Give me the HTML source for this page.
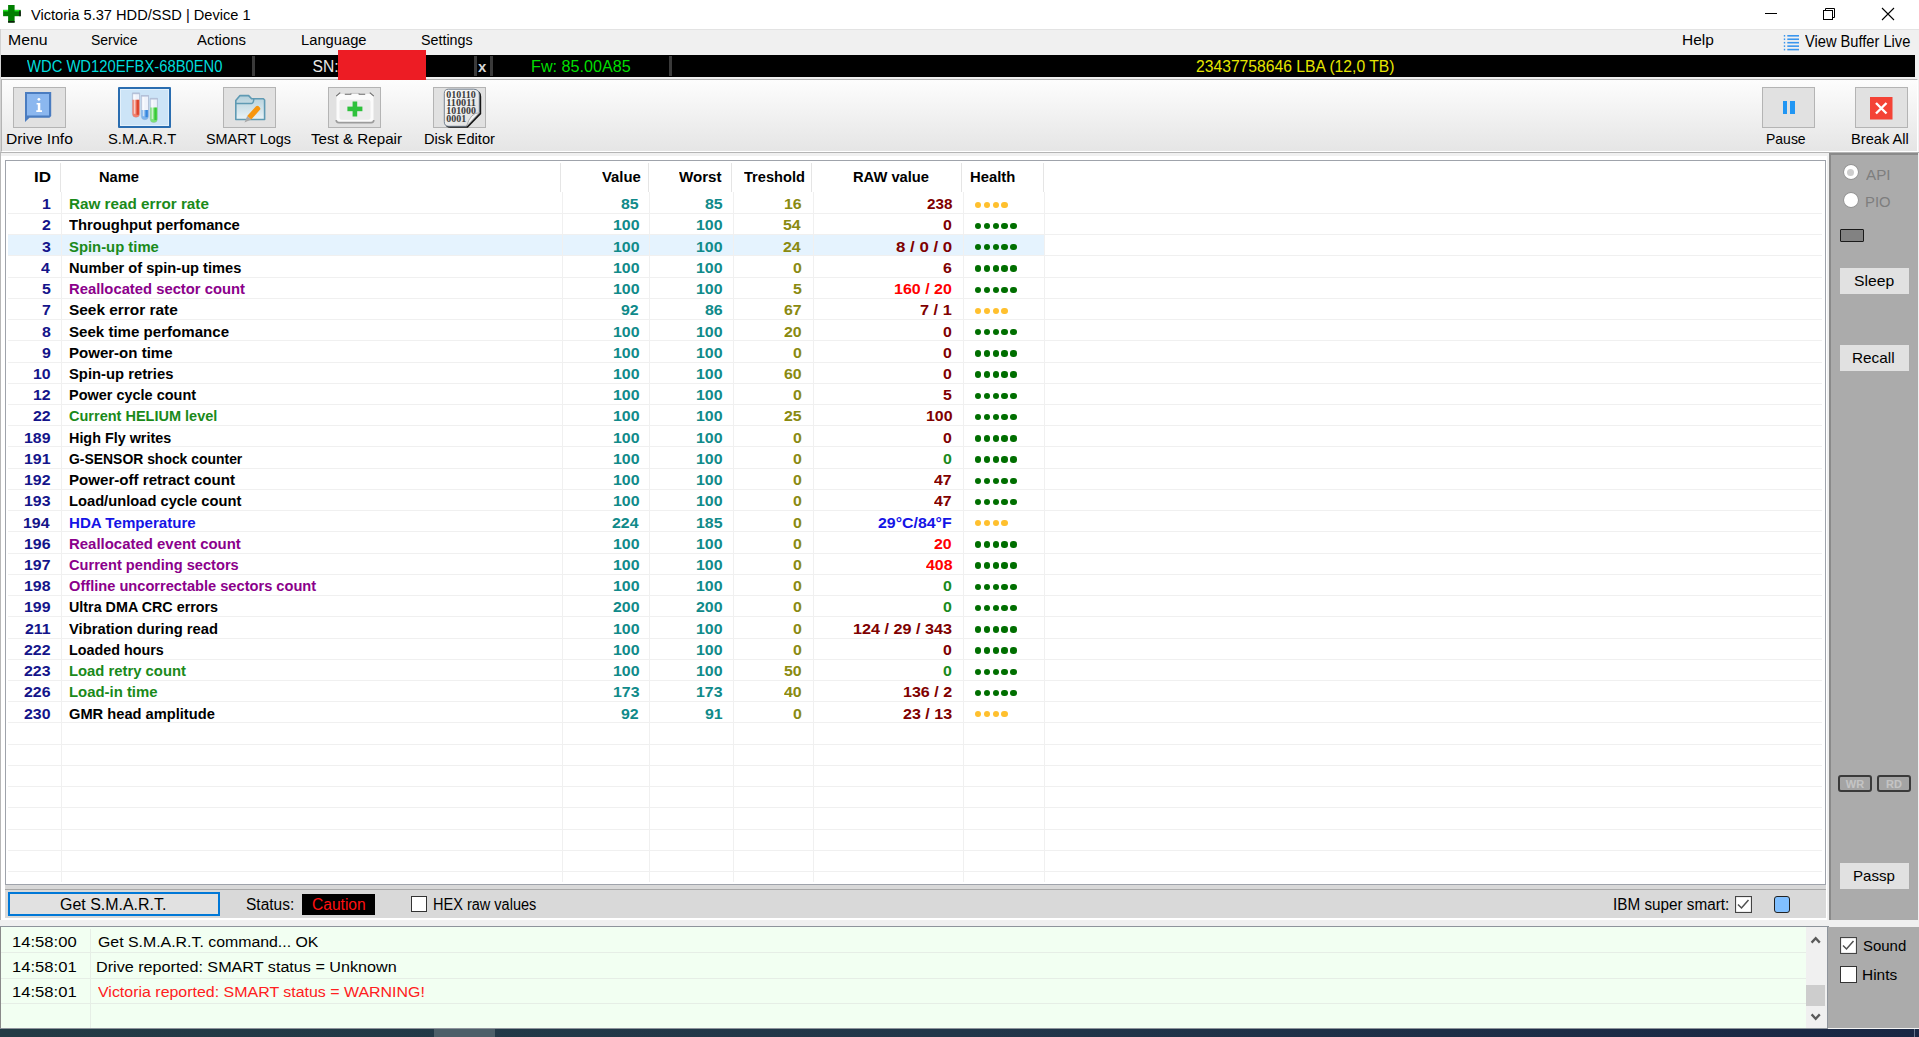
<!DOCTYPE html><html><head><meta charset="utf-8"><style>html,body{margin:0;padding:0;width:1919px;height:1037px;overflow:hidden;background:#fff;}.t{position:absolute;white-space:pre;font-family:"Liberation Sans",sans-serif;}.b{position:absolute;}</style></head><body><div class="b" style="left:0px;top:0px;width:1919px;height:29px;background:#fff"></div>
<svg class="b" style="left:0px;top:0px" width="28" height="28"><rect x="8.1" y="5" width="6.5" height="17.6" fill="#007f00"/><rect x="3.1" y="9.9" width="17.7" height="6.3" fill="#007f00"/><rect x="3.1" y="9.9" width="5" height="1.5" fill="#20e820"/><rect x="14.6" y="9.9" width="4.6" height="1.5" fill="#20e820"/><rect x="8.1" y="21" width="6.5" height="1.6" fill="#0e1e0e"/><rect x="19.2" y="11.2" width="1.6" height="5" fill="#1a1a1a"/></svg>
<div class="t" style="left:31.20px;top:6.70px;font-size:14.7px;line-height:16.90px;color:#000;font-weight:normal;;transform:scaleX(0.9954);transform-origin:0 0">Victoria 5.37 HDD/SSD | Device 1</div>
<div class="b" style="left:1765px;top:13px;width:12px;height:1px;background:#000"></div>
<svg class="b" style="left:1820px;top:5px" width="20" height="18"><rect x="3.5" y="5.5" width="9" height="9" fill="none" stroke="#000" stroke-width="1"/><path d="M5.5 5.5 V3.5 H14.5 V12.5 H12.5" fill="none" stroke="#000" stroke-width="1"/></svg>
<svg class="b" style="left:1880px;top:6px" width="16" height="16"><path d="M2 2 L14 14 M14 2 L2 14" stroke="#000" stroke-width="1.1"/></svg>
<div class="b" style="left:0px;top:29px;width:1919px;height:26px;background:#f0f0f0;border-top:1px solid #e3e3e3;box-sizing:border-box"></div>
<div class="t" style="left:8.16px;top:31.15px;font-size:15.3px;line-height:17.59px;color:#000;font-weight:normal;;transform:scaleX(1.0365);transform-origin:0 0">Menu</div>
<div class="t" style="left:91.30px;top:31.15px;font-size:15.3px;line-height:17.59px;color:#000;font-weight:normal;;transform:scaleX(0.9129);transform-origin:0 0">Service</div>
<div class="t" style="left:196.50px;top:31.15px;font-size:15.3px;line-height:17.59px;color:#000;font-weight:normal;;transform:scaleX(0.9760);transform-origin:0 0">Actions</div>
<div class="t" style="left:300.74px;top:31.15px;font-size:15.3px;line-height:17.59px;color:#000;font-weight:normal;;transform:scaleX(0.9632);transform-origin:0 0">Language</div>
<div class="t" style="left:421.30px;top:31.15px;font-size:15.3px;line-height:17.59px;color:#000;font-weight:normal;;transform:scaleX(0.9349);transform-origin:0 0">Settings</div>
<div class="t" style="left:1681.99px;top:31.15px;font-size:15.3px;line-height:17.59px;color:#000;font-weight:normal;;transform:scaleX(1.0116);transform-origin:0 0">Help</div>
<svg class="b" style="left:1783px;top:34px" width="18" height="18"><rect x="0.8" y="1.00" width="1.4" height="1.6" fill="#3a96ee"/><rect x="4.3" y="1.00" width="11.7" height="1.6" fill="#3a96ee"/><rect x="0.8" y="4.45" width="1.4" height="1.6" fill="#3a96ee"/><rect x="4.3" y="4.45" width="11.7" height="1.6" fill="#3a96ee"/><rect x="0.8" y="7.90" width="1.4" height="1.6" fill="#3a96ee"/><rect x="4.3" y="7.90" width="11.7" height="1.6" fill="#3a96ee"/><rect x="0.8" y="11.35" width="1.4" height="1.6" fill="#3a96ee"/><rect x="4.3" y="11.35" width="11.7" height="1.6" fill="#3a96ee"/><rect x="0.8" y="14.80" width="1.4" height="1.6" fill="#3a96ee"/><rect x="4.3" y="14.80" width="11.7" height="1.6" fill="#3a96ee"/></svg>
<div class="t" style="left:1805.00px;top:32.88px;font-size:15.6px;line-height:17.94px;color:#000;font-weight:normal;;transform:scaleX(0.9395);transform-origin:0 0">View Buffer Live</div>
<div class="b" style="left:0px;top:55px;width:1919px;height:22px;background:#f0f0f0"></div>
<div class="b" style="left:1px;top:55px;width:1914px;height:22px;background:#000"></div>
<div class="b" style="left:252px;top:56px;width:3px;height:20px;background:#3a3a3a"></div>
<div class="b" style="left:474px;top:56px;width:3px;height:20px;background:#3a3a3a"></div>
<div class="b" style="left:490px;top:56px;width:3px;height:20px;background:#3a3a3a"></div>
<div class="b" style="left:669px;top:56px;width:3px;height:20px;background:#3a3a3a"></div>
<div class="t" style="left:27.20px;top:57.68px;font-size:15.6px;line-height:17.94px;color:#00dcdc;font-weight:normal;;transform:scaleX(0.9479);transform-origin:0 0">WDC WD120EFBX-68B0EN0</div>
<div class="t" style="left:312.5px;top:57.68px;font-size:15.6px;line-height:17.94px;color:#e8e8e8;font-weight:normal;">SN:</div>
<div class="t" style="left:478px;top:57.92px;font-size:15px;line-height:17.25px;color:#d8d8d8;font-weight:bold;">x</div>
<div class="t" style="left:530.66px;top:57.68px;font-size:15.6px;line-height:17.94px;color:#00dd00;font-weight:normal;;transform:scaleX(1.0372);transform-origin:0 0">Fw: 85.00A85</div>
<div class="t" style="left:1195.60px;top:57.68px;font-size:15.6px;line-height:17.94px;color:#e6e600;font-weight:normal;;transform:scaleX(1.0054);transform-origin:0 0">23437758646 LBA (12,0 TB)</div>
<div class="b" style="left:0px;top:77px;width:1919px;height:76px;background:#f0f0f0"></div>
<div class="b" style="left:1px;top:79px;width:1917px;height:73px;background:linear-gradient(#fdfdfd,#e5e5e5);border-top:1px solid #b4b4b4;border-left:1px solid #b4b4b4;border-right:1px solid #fff;border-bottom:1px solid #fff;box-sizing:border-box"></div>
<div class="b" style="left:12.5px;top:86.5px;width:53.5px;height:41px;background:#e1e1e1;border:1.2px solid #b4b4b4;box-sizing:border-box"></div>
<svg class="b" style="left:24px;top:91px" width="30" height="33"><path d="M1 1 H27.2 V25 L25.5 26.7 H5.5 L1 31 Z" fill="#4a7cc0"/><path d="M3 3 H25 V24.5 H3 Z" fill="#8bb7ef"/><circle cx="14.9" cy="8.3" r="1.4" fill="#fff"/><path d="M12.6 12 H16.3 V19.3 H18 V21 H12.3 V19.3 H13.8 V13.4 H12.6 Z" fill="#fff"/></svg>
<div class="t" style="left:6.46px;top:130.12px;font-size:15px;line-height:17.25px;color:#000;font-weight:normal;;transform:scaleX(1.0422);transform-origin:0 0">Drive Info</div>
<div class="b" style="left:117.6px;top:86.6px;width:53.6px;height:41.2px;background:#cce4f7;border:2px solid #2a6db0;border-radius:1px;box-sizing:border-box;box-shadow:inset 0 0 0 1px #e4f1fb"></div>
<svg class="b" style="left:115px;top:82px" width="60" height="50"><path d="M17.4 11.1 H24.599999999999998 V31.699999999999996 A3.6 3.6 0 0 1 17.4 31.699999999999996 Z" fill="#eef2fb" stroke="#a9b7cf" stroke-width="0.8"/><rect x="17.099999999999998" y="10.799999999999999" width="7.8" height="1.4" fill="#b4c0d8"/><path d="M17.4 17.8 H24.599999999999998 V31.699999999999996 A3.6 3.6 0 0 1 17.4 31.699999999999996 Z" fill="#f0806e"/><rect x="21.599999999999998" y="17.8" width="2.3" height="14.999999999999996" fill="#d42a10" opacity="0.7"/><rect x="18.799999999999997" y="12.6" width="1.6" height="19.2" fill="#fff" opacity="0.6"/><path d="M26.3 13.5 H33.5 V34.1 A3.6 3.6 0 0 1 26.3 34.1 Z" fill="#eef2fb" stroke="#a9b7cf" stroke-width="0.8"/><rect x="26.0" y="13.2" width="7.8" height="1.4" fill="#b4c0d8"/><path d="M26.3 28 H33.5 V34.1 A3.6 3.6 0 0 1 26.3 34.1 Z" fill="#7db3ec"/><rect x="30.5" y="28" width="2.3" height="7.200000000000003" fill="#1a74d8" opacity="0.7"/><rect x="27.7" y="15.0" width="1.6" height="19.2" fill="#fff" opacity="0.6"/><path d="M35.2 16.4 H42.400000000000006 V36.99999999999999 A3.6 3.6 0 0 1 35.2 36.99999999999999 Z" fill="#eef2fb" stroke="#a9b7cf" stroke-width="0.8"/><rect x="34.900000000000006" y="16.099999999999998" width="7.8" height="1.4" fill="#b4c0d8"/><path d="M35.2 25.6 H42.400000000000006 V36.99999999999999 A3.6 3.6 0 0 1 35.2 36.99999999999999 Z" fill="#7ce07a"/><rect x="39.400000000000006" y="25.6" width="2.3" height="12.499999999999993" fill="#18c018" opacity="0.7"/><rect x="36.6" y="17.9" width="1.6" height="19.2" fill="#fff" opacity="0.6"/></svg>
<div class="t" style="left:108.00px;top:130.12px;font-size:15px;line-height:17.25px;color:#000;font-weight:normal;;transform:scaleX(0.9854);transform-origin:0 0">S.M.A.R.T</div>
<div class="b" style="left:222.5px;top:86.5px;width:53.5px;height:41px;background:#e1e1e1;border:1.2px solid #b4b4b4;box-sizing:border-box"></div>
<svg class="b" style="left:233px;top:93px" width="34" height="32"><defs><linearGradient id="fg" x1="0" y1="0" x2="0" y2="1"><stop offset="0" stop-color="#b3cfda"/><stop offset="1" stop-color="#eaf3f7"/></linearGradient></defs><path d="M2.8 26.5 V7.6 L7 2.6 H15.6 L18.6 5.8 H30.4 L31.6 7 V26.5 Z" fill="url(#fg)" stroke="#5f9ab3" stroke-width="1.6" stroke-linejoin="round"/><path d="M2.8 10.4 H18.5 Q20.6 10.4 20.8 6" fill="none" stroke="#5f9ab3" stroke-width="1.5"/><path d="M14.2 23 L22.8 13.4 Q24.2 12 25.7 13.3 L26.8 14.4 Q28 15.8 26.7 17.1 L18.2 26.5 Z" fill="#f7960f"/><path d="M14.2 23 L18.2 26.5 L11.5 29.5 Z" fill="#a8a8a8"/></svg>
<div class="t" style="left:205.50px;top:130.12px;font-size:15px;line-height:17.25px;color:#000;font-weight:normal;;transform:scaleX(0.9590);transform-origin:0 0">SMART Logs</div>
<div class="b" style="left:327.5px;top:86.5px;width:53.5px;height:41px;background:#e1e1e1;border:1.2px solid #b4b4b4;box-sizing:border-box"></div>
<svg class="b" style="left:334px;top:90px" width="42" height="36"><rect x="2.5" y="4" width="37" height="28.5" rx="3" fill="#fbfbfb"/><rect x="5.5" y="9.8" width="31" height="20" rx="2" fill="#ececec"/><path d="M2.2 6.2 L6.2 2.6 M10.8 4.3 H16.8 L17.4 3.3 M24.6 3.3 L25.2 4.3 H31.2 M35.8 2.6 L39.8 6.2" fill="none" stroke="#6a6a6a" stroke-width="1.1"/><path d="M17.4 3.3 H24.6" stroke="#c8c8c8" stroke-width="1"/><path d="M2.2 30 Q2.2 32.6 4.8 32.6 H37.2 Q39.8 32.6 39.8 30" fill="none" stroke="#9c9c9c" stroke-width="1.6"/><rect x="18.6" y="11.5" width="4.6" height="15" fill="#2ec13c"/><rect x="13.4" y="16.6" width="15" height="4.6" fill="#2ec13c"/></svg>
<div class="t" style="left:311.00px;top:130.12px;font-size:15px;line-height:17.25px;color:#000;font-weight:normal;;transform:scaleX(1.0106);transform-origin:0 0">Test &amp; Repair</div>
<div class="b" style="left:432.5px;top:86.5px;width:53.5px;height:41px;background:#e1e1e1;border:1.2px solid #b4b4b4;box-sizing:border-box"></div>
<svg class="b" style="left:443px;top:88px" width="40" height="41"><defs><linearGradient id="dg" x1="0" y1="0" x2="1" y2="1"><stop offset="0" stop-color="#fafafa"/><stop offset="1" stop-color="#dcdcdc"/></linearGradient></defs><path d="M6.5 2.5 H32 Q38.2 2.5 38.2 8.7 V26 L24.8 39.8 H7 Q2.6 39.8 2.6 35.4 V6.5 Q2.6 2.5 6.5 2.5 Z" fill="#151515"/><path d="M5.5 1.2 H30.5 Q36.3 1.2 36.3 7 V25 L23.3 38.3 H5.8 Q1.3 38.3 1.3 33.8 V5.4 Q1.3 1.2 5.5 1.2 Z" fill="url(#dg)" stroke="#6a7888" stroke-width="0.9"/><g font-family="Liberation Serif" font-size="9.4" font-weight="bold" fill="#3c3c3c"><text x="3.3" y="9.5" textLength="29.6" lengthAdjust="spacingAndGlyphs">010110</text><text x="3.3" y="17.8" textLength="29.6" lengthAdjust="spacingAndGlyphs">110011</text><text x="3.3" y="25.8" textLength="29.6" lengthAdjust="spacingAndGlyphs">101000</text><text x="3.3" y="33.7" textLength="20" lengthAdjust="spacingAndGlyphs">0001</text></g><path d="M36.3 24.8 Q27.5 24.5 23.6 38.2 Z" fill="#f2f2f2" stroke="#9a9a9a" stroke-width="0.8"/></svg>
<div class="t" style="left:424.02px;top:130.12px;font-size:15px;line-height:17.25px;color:#000;font-weight:normal;;transform:scaleX(0.9787);transform-origin:0 0">Disk Editor</div>
<div class="b" style="left:1761.5px;top:86.5px;width:53.5px;height:41px;background:#e1e1e1;border:1.2px solid #b4b4b4;box-sizing:border-box"></div>
<div class="b" style="left:1782.5px;top:101px;width:4.7px;height:12.8px;background:#2196f3"></div><div class="b" style="left:1790px;top:101px;width:5px;height:12.8px;background:#2196f3"></div>
<div class="t" style="left:1765.67px;top:130.12px;font-size:15px;line-height:17.25px;color:#000;font-weight:normal;;transform:scaleX(0.9323);transform-origin:0 0">Pause</div>
<div class="b" style="left:1854.5px;top:86.5px;width:53.5px;height:41px;background:#e1e1e1;border:1.2px solid #b4b4b4;box-sizing:border-box"></div>
<svg class="b" style="left:1870px;top:96.5px" width="23" height="23"><rect width="22.5" height="22.5" fill="#f44336"/><path d="M6 6 L16.5 16.5 M16.5 6 L6 16.5" stroke="#fff" stroke-width="2.4"/></svg>
<div class="t" style="left:1850.52px;top:130.12px;font-size:15px;line-height:17.25px;color:#000;font-weight:normal;;transform:scaleX(0.9763);transform-origin:0 0">Break All</div>
<div class="b" style="left:338px;top:50px;width:88px;height:30px;background:#ed1c24"></div>
<div class="b" style="left:0px;top:29px;width:1px;height:124px;background:#d2d2d2"></div>
<div class="b" style="left:0px;top:152px;width:1919px;height:775px;background:#f0f0f0"></div>
<div class="b" style="left:0px;top:152px;width:1919px;height:1px;background:#b4b4b4"></div>
<div class="b" style="left:0px;top:153px;width:1px;height:767px;background:#b8b8b8"></div>
<div class="b" style="left:1px;top:156px;width:1826px;height:764px;background:#fff"></div>
<div class="b" style="left:5px;top:160px;width:1821px;height:725px;background:#fff;border:1px solid #9fa3ab;box-sizing:border-box"></div>
<div class="b" style="left:60px;top:163px;width:1px;height:29px;background:#e5e5e5"></div>
<div class="b" style="left:560px;top:163px;width:1px;height:29px;background:#e5e5e5"></div>
<div class="b" style="left:648px;top:163px;width:1px;height:29px;background:#e5e5e5"></div>
<div class="b" style="left:731px;top:163px;width:1px;height:29px;background:#e5e5e5"></div>
<div class="b" style="left:811px;top:163px;width:1px;height:29px;background:#e5e5e5"></div>
<div class="b" style="left:961px;top:163px;width:1px;height:29px;background:#e5e5e5"></div>
<div class="b" style="left:1043px;top:163px;width:1px;height:29px;background:#e5e5e5"></div>
<div class="t" style="left:33.50px;top:169.29px;font-size:14.6px;line-height:16.79px;color:#000;font-weight:bold;;transform:scaleX(1.1669);transform-origin:0 0">ID</div>
<div class="t" style="left:98.80px;top:169.29px;font-size:14.6px;line-height:16.79px;color:#000;font-weight:bold;;transform:scaleX(1.0042);transform-origin:0 0">Name</div>
<div class="t" style="left:602.40px;top:169.29px;font-size:14.6px;line-height:16.79px;color:#000;font-weight:bold;;transform:scaleX(1.0181);transform-origin:0 0">Value</div>
<div class="t" style="left:678.70px;top:169.29px;font-size:14.6px;line-height:16.79px;color:#000;font-weight:bold;;transform:scaleX(1.0359);transform-origin:0 0">Worst</div>
<div class="t" style="left:744.00px;top:169.29px;font-size:14.6px;line-height:16.79px;color:#000;font-weight:bold;;transform:scaleX(1.0016);transform-origin:0 0">Treshold</div>
<div class="t" style="left:852.80px;top:169.29px;font-size:14.6px;line-height:16.79px;color:#000;font-weight:bold;;transform:scaleX(1.0079);transform-origin:0 0">RAW value</div>
<div class="t" style="left:970.00px;top:169.29px;font-size:14.6px;line-height:16.79px;color:#000;font-weight:bold;;transform:scaleX(1.0160);transform-origin:0 0">Health</div>
<div class="b" style="left:8px;top:213px;width:1814px;height:1px;background:#f0f0f0"></div>
<div class="b" style="left:8px;top:234px;width:1814px;height:1px;background:#f0f0f0"></div>
<div class="b" style="left:8px;top:255px;width:1814px;height:1px;background:#f0f0f0"></div>
<div class="b" style="left:8px;top:277px;width:1814px;height:1px;background:#f0f0f0"></div>
<div class="b" style="left:8px;top:298px;width:1814px;height:1px;background:#f0f0f0"></div>
<div class="b" style="left:8px;top:319px;width:1814px;height:1px;background:#f0f0f0"></div>
<div class="b" style="left:8px;top:340px;width:1814px;height:1px;background:#f0f0f0"></div>
<div class="b" style="left:8px;top:362px;width:1814px;height:1px;background:#f0f0f0"></div>
<div class="b" style="left:8px;top:383px;width:1814px;height:1px;background:#f0f0f0"></div>
<div class="b" style="left:8px;top:404px;width:1814px;height:1px;background:#f0f0f0"></div>
<div class="b" style="left:8px;top:425px;width:1814px;height:1px;background:#f0f0f0"></div>
<div class="b" style="left:8px;top:446px;width:1814px;height:1px;background:#f0f0f0"></div>
<div class="b" style="left:8px;top:468px;width:1814px;height:1px;background:#f0f0f0"></div>
<div class="b" style="left:8px;top:489px;width:1814px;height:1px;background:#f0f0f0"></div>
<div class="b" style="left:8px;top:510px;width:1814px;height:1px;background:#f0f0f0"></div>
<div class="b" style="left:8px;top:531px;width:1814px;height:1px;background:#f0f0f0"></div>
<div class="b" style="left:8px;top:553px;width:1814px;height:1px;background:#f0f0f0"></div>
<div class="b" style="left:8px;top:574px;width:1814px;height:1px;background:#f0f0f0"></div>
<div class="b" style="left:8px;top:595px;width:1814px;height:1px;background:#f0f0f0"></div>
<div class="b" style="left:8px;top:616px;width:1814px;height:1px;background:#f0f0f0"></div>
<div class="b" style="left:8px;top:638px;width:1814px;height:1px;background:#f0f0f0"></div>
<div class="b" style="left:8px;top:659px;width:1814px;height:1px;background:#f0f0f0"></div>
<div class="b" style="left:8px;top:680px;width:1814px;height:1px;background:#f0f0f0"></div>
<div class="b" style="left:8px;top:701px;width:1814px;height:1px;background:#f0f0f0"></div>
<div class="b" style="left:8px;top:722px;width:1814px;height:1px;background:#f0f0f0"></div>
<div class="b" style="left:8px;top:744px;width:1814px;height:1px;background:#f0f0f0"></div>
<div class="b" style="left:8px;top:765px;width:1814px;height:1px;background:#f0f0f0"></div>
<div class="b" style="left:8px;top:786px;width:1814px;height:1px;background:#f0f0f0"></div>
<div class="b" style="left:8px;top:807px;width:1814px;height:1px;background:#f0f0f0"></div>
<div class="b" style="left:8px;top:829px;width:1814px;height:1px;background:#f0f0f0"></div>
<div class="b" style="left:8px;top:850px;width:1814px;height:1px;background:#f0f0f0"></div>
<div class="b" style="left:8px;top:871px;width:1814px;height:1px;background:#f0f0f0"></div>
<div class="b" style="left:8px;top:235px;width:1036px;height:20px;background:#e5f3fe"></div>
<div class="b" style="left:61px;top:192px;width:1px;height:690px;background:#f0f0f0"></div>
<div class="b" style="left:562px;top:192px;width:1px;height:690px;background:#f0f0f0"></div>
<div class="b" style="left:649px;top:192px;width:1px;height:690px;background:#f0f0f0"></div>
<div class="b" style="left:733px;top:192px;width:1px;height:690px;background:#f0f0f0"></div>
<div class="b" style="left:813px;top:192px;width:1px;height:690px;background:#f0f0f0"></div>
<div class="b" style="left:963px;top:192px;width:1px;height:690px;background:#f0f0f0"></div>
<div class="b" style="left:1044px;top:192px;width:1px;height:690px;background:#f0f0f0"></div>
<div class="t" style="left:42.08px;top:196.19px;font-size:14.6px;line-height:16.79px;color:#14148a;font-weight:bold;;transform:scaleX(1.0900);transform-origin:0 0">1</div>
<div class="t" style="left:69.00px;top:196.19px;font-size:14.6px;line-height:16.79px;color:#1a8a1a;font-weight:bold;;transform:scaleX(1.0451);transform-origin:0 0">Raw read error rate</div>
<div class="t" style="left:621.43px;top:196.19px;font-size:14.6px;line-height:16.79px;color:#108a8a;font-weight:bold;;transform:scaleX(1.0900);transform-origin:0 0">85</div>
<div class="t" style="left:704.73px;top:196.19px;font-size:14.6px;line-height:16.79px;color:#108a8a;font-weight:bold;;transform:scaleX(1.0900);transform-origin:0 0">85</div>
<div class="t" style="left:784.23px;top:196.19px;font-size:14.6px;line-height:16.79px;color:#8a8a10;font-weight:bold;;transform:scaleX(1.0900);transform-origin:0 0">16</div>
<div class="t" style="left:926.70px;top:196.19px;font-size:14.6px;line-height:16.79px;color:#7f0000;font-weight:bold;;transform:scaleX(1.0440);transform-origin:0 0">238</div>
<div class="b" style="left:974.80px;top:201.65px;width:6.4px;height:6.4px;border-radius:50%;background:#ffc02e"></div>
<div class="b" style="left:983.65px;top:201.65px;width:6.4px;height:6.4px;border-radius:50%;background:#ffc02e"></div>
<div class="b" style="left:992.50px;top:201.65px;width:6.4px;height:6.4px;border-radius:50%;background:#ffc02e"></div>
<div class="b" style="left:1001.35px;top:201.65px;width:6.4px;height:6.4px;border-radius:50%;background:#ffc02e"></div>
<div class="t" style="left:42.08px;top:217.41px;font-size:14.6px;line-height:16.79px;color:#14148a;font-weight:bold;;transform:scaleX(1.0900);transform-origin:0 0">2</div>
<div class="t" style="left:69.00px;top:217.41px;font-size:14.6px;line-height:16.79px;color:#000;font-weight:bold;;transform:scaleX(1.0130);transform-origin:0 0">Throughput perfomance</div>
<div class="t" style="left:612.59px;top:217.41px;font-size:14.6px;line-height:16.79px;color:#108a8a;font-weight:bold;;transform:scaleX(1.0900);transform-origin:0 0">100</div>
<div class="t" style="left:695.89px;top:217.41px;font-size:14.6px;line-height:16.79px;color:#108a8a;font-weight:bold;;transform:scaleX(1.0900);transform-origin:0 0">100</div>
<div class="t" style="left:783.14px;top:217.41px;font-size:14.6px;line-height:16.79px;color:#8a8a10;font-weight:bold;;transform:scaleX(1.0900);transform-origin:0 0">54</div>
<div class="t" style="left:943.28px;top:217.41px;font-size:14.6px;line-height:16.79px;color:#7f0000;font-weight:bold;;transform:scaleX(1.0900);transform-origin:0 0">0</div>
<div class="b" style="left:974.80px;top:222.88px;width:6.4px;height:6.4px;border-radius:50%;background:#006f00"></div>
<div class="b" style="left:983.65px;top:222.88px;width:6.4px;height:6.4px;border-radius:50%;background:#006f00"></div>
<div class="b" style="left:992.50px;top:222.88px;width:6.4px;height:6.4px;border-radius:50%;background:#006f00"></div>
<div class="b" style="left:1001.35px;top:222.88px;width:6.4px;height:6.4px;border-radius:50%;background:#006f00"></div>
<div class="b" style="left:1010.20px;top:222.88px;width:6.4px;height:6.4px;border-radius:50%;background:#006f00"></div>
<div class="t" style="left:42.08px;top:238.64px;font-size:14.6px;line-height:16.79px;color:#14148a;font-weight:bold;;transform:scaleX(1.0900);transform-origin:0 0">3</div>
<div class="t" style="left:69.00px;top:238.64px;font-size:14.6px;line-height:16.79px;color:#1a8a1a;font-weight:bold;;transform:scaleX(1.0164);transform-origin:0 0">Spin-up time</div>
<div class="t" style="left:612.59px;top:238.64px;font-size:14.6px;line-height:16.79px;color:#108a8a;font-weight:bold;;transform:scaleX(1.0900);transform-origin:0 0">100</div>
<div class="t" style="left:695.89px;top:238.64px;font-size:14.6px;line-height:16.79px;color:#108a8a;font-weight:bold;;transform:scaleX(1.0900);transform-origin:0 0">100</div>
<div class="t" style="left:783.14px;top:238.64px;font-size:14.6px;line-height:16.79px;color:#8a8a10;font-weight:bold;;transform:scaleX(1.0900);transform-origin:0 0">24</div>
<div class="t" style="left:895.90px;top:238.64px;font-size:14.6px;line-height:16.79px;color:#7f0000;font-weight:bold;;transform:scaleX(1.1553);transform-origin:0 0">8 / 0 / 0</div>
<div class="b" style="left:974.80px;top:244.10px;width:6.4px;height:6.4px;border-radius:50%;background:#006f00"></div>
<div class="b" style="left:983.65px;top:244.10px;width:6.4px;height:6.4px;border-radius:50%;background:#006f00"></div>
<div class="b" style="left:992.50px;top:244.10px;width:6.4px;height:6.4px;border-radius:50%;background:#006f00"></div>
<div class="b" style="left:1001.35px;top:244.10px;width:6.4px;height:6.4px;border-radius:50%;background:#006f00"></div>
<div class="b" style="left:1010.20px;top:244.10px;width:6.4px;height:6.4px;border-radius:50%;background:#006f00"></div>
<div class="t" style="left:40.99px;top:259.86px;font-size:14.6px;line-height:16.79px;color:#14148a;font-weight:bold;;transform:scaleX(1.0900);transform-origin:0 0">4</div>
<div class="t" style="left:69.00px;top:259.86px;font-size:14.6px;line-height:16.79px;color:#000;font-weight:bold;;transform:scaleX(1.0025);transform-origin:0 0">Number of spin-up times</div>
<div class="t" style="left:612.59px;top:259.86px;font-size:14.6px;line-height:16.79px;color:#108a8a;font-weight:bold;;transform:scaleX(1.0900);transform-origin:0 0">100</div>
<div class="t" style="left:695.89px;top:259.86px;font-size:14.6px;line-height:16.79px;color:#108a8a;font-weight:bold;;transform:scaleX(1.0900);transform-origin:0 0">100</div>
<div class="t" style="left:793.08px;top:259.86px;font-size:14.6px;line-height:16.79px;color:#8a8a10;font-weight:bold;;transform:scaleX(1.0900);transform-origin:0 0">0</div>
<div class="t" style="left:943.28px;top:259.86px;font-size:14.6px;line-height:16.79px;color:#7f0000;font-weight:bold;;transform:scaleX(1.0900);transform-origin:0 0">6</div>
<div class="b" style="left:974.80px;top:265.32px;width:6.4px;height:6.4px;border-radius:50%;background:#006f00"></div>
<div class="b" style="left:983.65px;top:265.32px;width:6.4px;height:6.4px;border-radius:50%;background:#006f00"></div>
<div class="b" style="left:992.50px;top:265.32px;width:6.4px;height:6.4px;border-radius:50%;background:#006f00"></div>
<div class="b" style="left:1001.35px;top:265.32px;width:6.4px;height:6.4px;border-radius:50%;background:#006f00"></div>
<div class="b" style="left:1010.20px;top:265.32px;width:6.4px;height:6.4px;border-radius:50%;background:#006f00"></div>
<div class="t" style="left:42.08px;top:281.09px;font-size:14.6px;line-height:16.79px;color:#14148a;font-weight:bold;;transform:scaleX(1.0900);transform-origin:0 0">5</div>
<div class="t" style="left:69.00px;top:281.09px;font-size:14.6px;line-height:16.79px;color:#8b008b;font-weight:bold;;transform:scaleX(1.0139);transform-origin:0 0">Reallocated sector count</div>
<div class="t" style="left:612.59px;top:281.09px;font-size:14.6px;line-height:16.79px;color:#108a8a;font-weight:bold;;transform:scaleX(1.0900);transform-origin:0 0">100</div>
<div class="t" style="left:695.89px;top:281.09px;font-size:14.6px;line-height:16.79px;color:#108a8a;font-weight:bold;;transform:scaleX(1.0900);transform-origin:0 0">100</div>
<div class="t" style="left:793.08px;top:281.09px;font-size:14.6px;line-height:16.79px;color:#8a8a10;font-weight:bold;;transform:scaleX(1.0900);transform-origin:0 0">5</div>
<div class="t" style="left:894.30px;top:281.09px;font-size:14.6px;line-height:16.79px;color:#ff0000;font-weight:bold;;transform:scaleX(1.0963);transform-origin:0 0">160 / 20</div>
<div class="b" style="left:974.80px;top:286.55px;width:6.4px;height:6.4px;border-radius:50%;background:#006f00"></div>
<div class="b" style="left:983.65px;top:286.55px;width:6.4px;height:6.4px;border-radius:50%;background:#006f00"></div>
<div class="b" style="left:992.50px;top:286.55px;width:6.4px;height:6.4px;border-radius:50%;background:#006f00"></div>
<div class="b" style="left:1001.35px;top:286.55px;width:6.4px;height:6.4px;border-radius:50%;background:#006f00"></div>
<div class="b" style="left:1010.20px;top:286.55px;width:6.4px;height:6.4px;border-radius:50%;background:#006f00"></div>
<div class="t" style="left:42.08px;top:302.31px;font-size:14.6px;line-height:16.79px;color:#14148a;font-weight:bold;;transform:scaleX(1.0900);transform-origin:0 0">7</div>
<div class="t" style="left:69.00px;top:302.31px;font-size:14.6px;line-height:16.79px;color:#000;font-weight:bold;;transform:scaleX(1.0562);transform-origin:0 0">Seek error rate</div>
<div class="t" style="left:621.43px;top:302.31px;font-size:14.6px;line-height:16.79px;color:#108a8a;font-weight:bold;;transform:scaleX(1.0900);transform-origin:0 0">92</div>
<div class="t" style="left:704.73px;top:302.31px;font-size:14.6px;line-height:16.79px;color:#108a8a;font-weight:bold;;transform:scaleX(1.0900);transform-origin:0 0">86</div>
<div class="t" style="left:784.23px;top:302.31px;font-size:14.6px;line-height:16.79px;color:#8a8a10;font-weight:bold;;transform:scaleX(1.0900);transform-origin:0 0">67</div>
<div class="t" style="left:920.40px;top:302.31px;font-size:14.6px;line-height:16.79px;color:#7f0000;font-weight:bold;;transform:scaleX(1.1174);transform-origin:0 0">7 / 1</div>
<div class="b" style="left:974.80px;top:307.77px;width:6.4px;height:6.4px;border-radius:50%;background:#ffc02e"></div>
<div class="b" style="left:983.65px;top:307.77px;width:6.4px;height:6.4px;border-radius:50%;background:#ffc02e"></div>
<div class="b" style="left:992.50px;top:307.77px;width:6.4px;height:6.4px;border-radius:50%;background:#ffc02e"></div>
<div class="b" style="left:1001.35px;top:307.77px;width:6.4px;height:6.4px;border-radius:50%;background:#ffc02e"></div>
<div class="t" style="left:42.08px;top:323.54px;font-size:14.6px;line-height:16.79px;color:#14148a;font-weight:bold;;transform:scaleX(1.0900);transform-origin:0 0">8</div>
<div class="t" style="left:69.00px;top:323.54px;font-size:14.6px;line-height:16.79px;color:#000;font-weight:bold;;transform:scaleX(1.0329);transform-origin:0 0">Seek time perfomance</div>
<div class="t" style="left:612.59px;top:323.54px;font-size:14.6px;line-height:16.79px;color:#108a8a;font-weight:bold;;transform:scaleX(1.0900);transform-origin:0 0">100</div>
<div class="t" style="left:695.89px;top:323.54px;font-size:14.6px;line-height:16.79px;color:#108a8a;font-weight:bold;;transform:scaleX(1.0900);transform-origin:0 0">100</div>
<div class="t" style="left:784.23px;top:323.54px;font-size:14.6px;line-height:16.79px;color:#8a8a10;font-weight:bold;;transform:scaleX(1.0900);transform-origin:0 0">20</div>
<div class="t" style="left:943.28px;top:323.54px;font-size:14.6px;line-height:16.79px;color:#7f0000;font-weight:bold;;transform:scaleX(1.0900);transform-origin:0 0">0</div>
<div class="b" style="left:974.80px;top:329.00px;width:6.4px;height:6.4px;border-radius:50%;background:#006f00"></div>
<div class="b" style="left:983.65px;top:329.00px;width:6.4px;height:6.4px;border-radius:50%;background:#006f00"></div>
<div class="b" style="left:992.50px;top:329.00px;width:6.4px;height:6.4px;border-radius:50%;background:#006f00"></div>
<div class="b" style="left:1001.35px;top:329.00px;width:6.4px;height:6.4px;border-radius:50%;background:#006f00"></div>
<div class="b" style="left:1010.20px;top:329.00px;width:6.4px;height:6.4px;border-radius:50%;background:#006f00"></div>
<div class="t" style="left:42.08px;top:344.76px;font-size:14.6px;line-height:16.79px;color:#14148a;font-weight:bold;;transform:scaleX(1.0900);transform-origin:0 0">9</div>
<div class="t" style="left:69.00px;top:344.76px;font-size:14.6px;line-height:16.79px;color:#000;font-weight:bold;;transform:scaleX(1.0296);transform-origin:0 0">Power-on time</div>
<div class="t" style="left:612.59px;top:344.76px;font-size:14.6px;line-height:16.79px;color:#108a8a;font-weight:bold;;transform:scaleX(1.0900);transform-origin:0 0">100</div>
<div class="t" style="left:695.89px;top:344.76px;font-size:14.6px;line-height:16.79px;color:#108a8a;font-weight:bold;;transform:scaleX(1.0900);transform-origin:0 0">100</div>
<div class="t" style="left:793.08px;top:344.76px;font-size:14.6px;line-height:16.79px;color:#8a8a10;font-weight:bold;;transform:scaleX(1.0900);transform-origin:0 0">0</div>
<div class="t" style="left:943.28px;top:344.76px;font-size:14.6px;line-height:16.79px;color:#7f0000;font-weight:bold;;transform:scaleX(1.0900);transform-origin:0 0">0</div>
<div class="b" style="left:974.80px;top:350.23px;width:6.4px;height:6.4px;border-radius:50%;background:#006f00"></div>
<div class="b" style="left:983.65px;top:350.23px;width:6.4px;height:6.4px;border-radius:50%;background:#006f00"></div>
<div class="b" style="left:992.50px;top:350.23px;width:6.4px;height:6.4px;border-radius:50%;background:#006f00"></div>
<div class="b" style="left:1001.35px;top:350.23px;width:6.4px;height:6.4px;border-radius:50%;background:#006f00"></div>
<div class="b" style="left:1010.20px;top:350.23px;width:6.4px;height:6.4px;border-radius:50%;background:#006f00"></div>
<div class="t" style="left:33.23px;top:365.99px;font-size:14.6px;line-height:16.79px;color:#14148a;font-weight:bold;;transform:scaleX(1.0900);transform-origin:0 0">10</div>
<div class="t" style="left:69.00px;top:365.99px;font-size:14.6px;line-height:16.79px;color:#000;font-weight:bold;;transform:scaleX(1.0139);transform-origin:0 0">Spin-up retries</div>
<div class="t" style="left:612.59px;top:365.99px;font-size:14.6px;line-height:16.79px;color:#108a8a;font-weight:bold;;transform:scaleX(1.0900);transform-origin:0 0">100</div>
<div class="t" style="left:695.89px;top:365.99px;font-size:14.6px;line-height:16.79px;color:#108a8a;font-weight:bold;;transform:scaleX(1.0900);transform-origin:0 0">100</div>
<div class="t" style="left:784.23px;top:365.99px;font-size:14.6px;line-height:16.79px;color:#8a8a10;font-weight:bold;;transform:scaleX(1.0900);transform-origin:0 0">60</div>
<div class="t" style="left:943.28px;top:365.99px;font-size:14.6px;line-height:16.79px;color:#7f0000;font-weight:bold;;transform:scaleX(1.0900);transform-origin:0 0">0</div>
<div class="b" style="left:974.80px;top:371.45px;width:6.4px;height:6.4px;border-radius:50%;background:#006f00"></div>
<div class="b" style="left:983.65px;top:371.45px;width:6.4px;height:6.4px;border-radius:50%;background:#006f00"></div>
<div class="b" style="left:992.50px;top:371.45px;width:6.4px;height:6.4px;border-radius:50%;background:#006f00"></div>
<div class="b" style="left:1001.35px;top:371.45px;width:6.4px;height:6.4px;border-radius:50%;background:#006f00"></div>
<div class="b" style="left:1010.20px;top:371.45px;width:6.4px;height:6.4px;border-radius:50%;background:#006f00"></div>
<div class="t" style="left:33.23px;top:387.21px;font-size:14.6px;line-height:16.79px;color:#14148a;font-weight:bold;;transform:scaleX(1.0900);transform-origin:0 0">12</div>
<div class="t" style="left:69.00px;top:387.21px;font-size:14.6px;line-height:16.79px;color:#000;font-weight:bold;;transform:scaleX(0.9915);transform-origin:0 0">Power cycle count</div>
<div class="t" style="left:612.59px;top:387.21px;font-size:14.6px;line-height:16.79px;color:#108a8a;font-weight:bold;;transform:scaleX(1.0900);transform-origin:0 0">100</div>
<div class="t" style="left:695.89px;top:387.21px;font-size:14.6px;line-height:16.79px;color:#108a8a;font-weight:bold;;transform:scaleX(1.0900);transform-origin:0 0">100</div>
<div class="t" style="left:793.08px;top:387.21px;font-size:14.6px;line-height:16.79px;color:#8a8a10;font-weight:bold;;transform:scaleX(1.0900);transform-origin:0 0">0</div>
<div class="t" style="left:943.28px;top:387.21px;font-size:14.6px;line-height:16.79px;color:#7f0000;font-weight:bold;;transform:scaleX(1.0900);transform-origin:0 0">5</div>
<div class="b" style="left:974.80px;top:392.68px;width:6.4px;height:6.4px;border-radius:50%;background:#006f00"></div>
<div class="b" style="left:983.65px;top:392.68px;width:6.4px;height:6.4px;border-radius:50%;background:#006f00"></div>
<div class="b" style="left:992.50px;top:392.68px;width:6.4px;height:6.4px;border-radius:50%;background:#006f00"></div>
<div class="b" style="left:1001.35px;top:392.68px;width:6.4px;height:6.4px;border-radius:50%;background:#006f00"></div>
<div class="b" style="left:1010.20px;top:392.68px;width:6.4px;height:6.4px;border-radius:50%;background:#006f00"></div>
<div class="t" style="left:33.23px;top:408.44px;font-size:14.6px;line-height:16.79px;color:#14148a;font-weight:bold;;transform:scaleX(1.0900);transform-origin:0 0">22</div>
<div class="t" style="left:69.00px;top:408.44px;font-size:14.6px;line-height:16.79px;color:#1a8a1a;font-weight:bold;;transform:scaleX(0.9943);transform-origin:0 0">Current HELIUM level</div>
<div class="t" style="left:612.59px;top:408.44px;font-size:14.6px;line-height:16.79px;color:#108a8a;font-weight:bold;;transform:scaleX(1.0900);transform-origin:0 0">100</div>
<div class="t" style="left:695.89px;top:408.44px;font-size:14.6px;line-height:16.79px;color:#108a8a;font-weight:bold;;transform:scaleX(1.0900);transform-origin:0 0">100</div>
<div class="t" style="left:784.23px;top:408.44px;font-size:14.6px;line-height:16.79px;color:#8a8a10;font-weight:bold;;transform:scaleX(1.0900);transform-origin:0 0">25</div>
<div class="t" style="left:925.59px;top:408.44px;font-size:14.6px;line-height:16.79px;color:#7f0000;font-weight:bold;;transform:scaleX(1.0900);transform-origin:0 0">100</div>
<div class="b" style="left:974.80px;top:413.90px;width:6.4px;height:6.4px;border-radius:50%;background:#006f00"></div>
<div class="b" style="left:983.65px;top:413.90px;width:6.4px;height:6.4px;border-radius:50%;background:#006f00"></div>
<div class="b" style="left:992.50px;top:413.90px;width:6.4px;height:6.4px;border-radius:50%;background:#006f00"></div>
<div class="b" style="left:1001.35px;top:413.90px;width:6.4px;height:6.4px;border-radius:50%;background:#006f00"></div>
<div class="b" style="left:1010.20px;top:413.90px;width:6.4px;height:6.4px;border-radius:50%;background:#006f00"></div>
<div class="t" style="left:24.39px;top:429.66px;font-size:14.6px;line-height:16.79px;color:#14148a;font-weight:bold;;transform:scaleX(1.0900);transform-origin:0 0">189</div>
<div class="t" style="left:69.00px;top:429.66px;font-size:14.6px;line-height:16.79px;color:#000;font-weight:bold;;transform:scaleX(0.9848);transform-origin:0 0">High Fly writes</div>
<div class="t" style="left:612.59px;top:429.66px;font-size:14.6px;line-height:16.79px;color:#108a8a;font-weight:bold;;transform:scaleX(1.0900);transform-origin:0 0">100</div>
<div class="t" style="left:695.89px;top:429.66px;font-size:14.6px;line-height:16.79px;color:#108a8a;font-weight:bold;;transform:scaleX(1.0900);transform-origin:0 0">100</div>
<div class="t" style="left:793.08px;top:429.66px;font-size:14.6px;line-height:16.79px;color:#8a8a10;font-weight:bold;;transform:scaleX(1.0900);transform-origin:0 0">0</div>
<div class="t" style="left:943.28px;top:429.66px;font-size:14.6px;line-height:16.79px;color:#7f0000;font-weight:bold;;transform:scaleX(1.0900);transform-origin:0 0">0</div>
<div class="b" style="left:974.80px;top:435.12px;width:6.4px;height:6.4px;border-radius:50%;background:#006f00"></div>
<div class="b" style="left:983.65px;top:435.12px;width:6.4px;height:6.4px;border-radius:50%;background:#006f00"></div>
<div class="b" style="left:992.50px;top:435.12px;width:6.4px;height:6.4px;border-radius:50%;background:#006f00"></div>
<div class="b" style="left:1001.35px;top:435.12px;width:6.4px;height:6.4px;border-radius:50%;background:#006f00"></div>
<div class="b" style="left:1010.20px;top:435.12px;width:6.4px;height:6.4px;border-radius:50%;background:#006f00"></div>
<div class="t" style="left:24.39px;top:450.89px;font-size:14.6px;line-height:16.79px;color:#14148a;font-weight:bold;;transform:scaleX(1.0900);transform-origin:0 0">191</div>
<div class="t" style="left:69.00px;top:450.89px;font-size:14.6px;line-height:16.79px;color:#000;font-weight:bold;;transform:scaleX(0.9540);transform-origin:0 0">G-SENSOR shock counter</div>
<div class="t" style="left:612.59px;top:450.89px;font-size:14.6px;line-height:16.79px;color:#108a8a;font-weight:bold;;transform:scaleX(1.0900);transform-origin:0 0">100</div>
<div class="t" style="left:695.89px;top:450.89px;font-size:14.6px;line-height:16.79px;color:#108a8a;font-weight:bold;;transform:scaleX(1.0900);transform-origin:0 0">100</div>
<div class="t" style="left:793.08px;top:450.89px;font-size:14.6px;line-height:16.79px;color:#8a8a10;font-weight:bold;;transform:scaleX(1.0900);transform-origin:0 0">0</div>
<div class="t" style="left:943.28px;top:450.89px;font-size:14.6px;line-height:16.79px;color:#1a8a1a;font-weight:bold;;transform:scaleX(1.0900);transform-origin:0 0">0</div>
<div class="b" style="left:974.80px;top:456.35px;width:6.4px;height:6.4px;border-radius:50%;background:#006f00"></div>
<div class="b" style="left:983.65px;top:456.35px;width:6.4px;height:6.4px;border-radius:50%;background:#006f00"></div>
<div class="b" style="left:992.50px;top:456.35px;width:6.4px;height:6.4px;border-radius:50%;background:#006f00"></div>
<div class="b" style="left:1001.35px;top:456.35px;width:6.4px;height:6.4px;border-radius:50%;background:#006f00"></div>
<div class="b" style="left:1010.20px;top:456.35px;width:6.4px;height:6.4px;border-radius:50%;background:#006f00"></div>
<div class="t" style="left:24.39px;top:472.11px;font-size:14.6px;line-height:16.79px;color:#14148a;font-weight:bold;;transform:scaleX(1.0900);transform-origin:0 0">192</div>
<div class="t" style="left:69.00px;top:472.11px;font-size:14.6px;line-height:16.79px;color:#000;font-weight:bold;;transform:scaleX(1.0343);transform-origin:0 0">Power-off retract count</div>
<div class="t" style="left:612.59px;top:472.11px;font-size:14.6px;line-height:16.79px;color:#108a8a;font-weight:bold;;transform:scaleX(1.0900);transform-origin:0 0">100</div>
<div class="t" style="left:695.89px;top:472.11px;font-size:14.6px;line-height:16.79px;color:#108a8a;font-weight:bold;;transform:scaleX(1.0900);transform-origin:0 0">100</div>
<div class="t" style="left:793.08px;top:472.11px;font-size:14.6px;line-height:16.79px;color:#8a8a10;font-weight:bold;;transform:scaleX(1.0900);transform-origin:0 0">0</div>
<div class="t" style="left:934.43px;top:472.11px;font-size:14.6px;line-height:16.79px;color:#7f0000;font-weight:bold;;transform:scaleX(1.0900);transform-origin:0 0">47</div>
<div class="b" style="left:974.80px;top:477.58px;width:6.4px;height:6.4px;border-radius:50%;background:#006f00"></div>
<div class="b" style="left:983.65px;top:477.58px;width:6.4px;height:6.4px;border-radius:50%;background:#006f00"></div>
<div class="b" style="left:992.50px;top:477.58px;width:6.4px;height:6.4px;border-radius:50%;background:#006f00"></div>
<div class="b" style="left:1001.35px;top:477.58px;width:6.4px;height:6.4px;border-radius:50%;background:#006f00"></div>
<div class="b" style="left:1010.20px;top:477.58px;width:6.4px;height:6.4px;border-radius:50%;background:#006f00"></div>
<div class="t" style="left:24.39px;top:493.34px;font-size:14.6px;line-height:16.79px;color:#14148a;font-weight:bold;;transform:scaleX(1.0900);transform-origin:0 0">193</div>
<div class="t" style="left:69.00px;top:493.34px;font-size:14.6px;line-height:16.79px;color:#000;font-weight:bold;;transform:scaleX(1.0074);transform-origin:0 0">Load/unload cycle count</div>
<div class="t" style="left:612.59px;top:493.34px;font-size:14.6px;line-height:16.79px;color:#108a8a;font-weight:bold;;transform:scaleX(1.0900);transform-origin:0 0">100</div>
<div class="t" style="left:695.89px;top:493.34px;font-size:14.6px;line-height:16.79px;color:#108a8a;font-weight:bold;;transform:scaleX(1.0900);transform-origin:0 0">100</div>
<div class="t" style="left:793.08px;top:493.34px;font-size:14.6px;line-height:16.79px;color:#8a8a10;font-weight:bold;;transform:scaleX(1.0900);transform-origin:0 0">0</div>
<div class="t" style="left:934.43px;top:493.34px;font-size:14.6px;line-height:16.79px;color:#7f0000;font-weight:bold;;transform:scaleX(1.0900);transform-origin:0 0">47</div>
<div class="b" style="left:974.80px;top:498.80px;width:6.4px;height:6.4px;border-radius:50%;background:#006f00"></div>
<div class="b" style="left:983.65px;top:498.80px;width:6.4px;height:6.4px;border-radius:50%;background:#006f00"></div>
<div class="b" style="left:992.50px;top:498.80px;width:6.4px;height:6.4px;border-radius:50%;background:#006f00"></div>
<div class="b" style="left:1001.35px;top:498.80px;width:6.4px;height:6.4px;border-radius:50%;background:#006f00"></div>
<div class="b" style="left:1010.20px;top:498.80px;width:6.4px;height:6.4px;border-radius:50%;background:#006f00"></div>
<div class="t" style="left:23.30px;top:514.56px;font-size:14.6px;line-height:16.79px;color:#14148a;font-weight:bold;;transform:scaleX(1.0900);transform-origin:0 0">194</div>
<div class="t" style="left:69.00px;top:514.56px;font-size:14.6px;line-height:16.79px;color:#1414e6;font-weight:bold;;transform:scaleX(1.0352);transform-origin:0 0">HDA Temperature</div>
<div class="t" style="left:611.50px;top:514.56px;font-size:14.6px;line-height:16.79px;color:#108a8a;font-weight:bold;;transform:scaleX(1.0900);transform-origin:0 0">224</div>
<div class="t" style="left:695.89px;top:514.56px;font-size:14.6px;line-height:16.79px;color:#108a8a;font-weight:bold;;transform:scaleX(1.0900);transform-origin:0 0">185</div>
<div class="t" style="left:793.08px;top:514.56px;font-size:14.6px;line-height:16.79px;color:#8a8a10;font-weight:bold;;transform:scaleX(1.0900);transform-origin:0 0">0</div>
<div class="t" style="left:878.30px;top:514.56px;font-size:14.6px;line-height:16.79px;color:#1414e6;font-weight:bold;;transform:scaleX(1.0881);transform-origin:0 0">29°C/84°F</div>
<div class="b" style="left:974.80px;top:520.02px;width:6.4px;height:6.4px;border-radius:50%;background:#ffc02e"></div>
<div class="b" style="left:983.65px;top:520.02px;width:6.4px;height:6.4px;border-radius:50%;background:#ffc02e"></div>
<div class="b" style="left:992.50px;top:520.02px;width:6.4px;height:6.4px;border-radius:50%;background:#ffc02e"></div>
<div class="b" style="left:1001.35px;top:520.02px;width:6.4px;height:6.4px;border-radius:50%;background:#ffc02e"></div>
<div class="t" style="left:24.39px;top:535.79px;font-size:14.6px;line-height:16.79px;color:#14148a;font-weight:bold;;transform:scaleX(1.0900);transform-origin:0 0">196</div>
<div class="t" style="left:69.00px;top:535.79px;font-size:14.6px;line-height:16.79px;color:#8b008b;font-weight:bold;;transform:scaleX(1.0237);transform-origin:0 0">Reallocated event count</div>
<div class="t" style="left:612.59px;top:535.79px;font-size:14.6px;line-height:16.79px;color:#108a8a;font-weight:bold;;transform:scaleX(1.0900);transform-origin:0 0">100</div>
<div class="t" style="left:695.89px;top:535.79px;font-size:14.6px;line-height:16.79px;color:#108a8a;font-weight:bold;;transform:scaleX(1.0900);transform-origin:0 0">100</div>
<div class="t" style="left:793.08px;top:535.79px;font-size:14.6px;line-height:16.79px;color:#8a8a10;font-weight:bold;;transform:scaleX(1.0900);transform-origin:0 0">0</div>
<div class="t" style="left:934.43px;top:535.79px;font-size:14.6px;line-height:16.79px;color:#ff0000;font-weight:bold;;transform:scaleX(1.0900);transform-origin:0 0">20</div>
<div class="b" style="left:974.80px;top:541.25px;width:6.4px;height:6.4px;border-radius:50%;background:#006f00"></div>
<div class="b" style="left:983.65px;top:541.25px;width:6.4px;height:6.4px;border-radius:50%;background:#006f00"></div>
<div class="b" style="left:992.50px;top:541.25px;width:6.4px;height:6.4px;border-radius:50%;background:#006f00"></div>
<div class="b" style="left:1001.35px;top:541.25px;width:6.4px;height:6.4px;border-radius:50%;background:#006f00"></div>
<div class="b" style="left:1010.20px;top:541.25px;width:6.4px;height:6.4px;border-radius:50%;background:#006f00"></div>
<div class="t" style="left:24.39px;top:557.01px;font-size:14.6px;line-height:16.79px;color:#14148a;font-weight:bold;;transform:scaleX(1.0900);transform-origin:0 0">197</div>
<div class="t" style="left:69.00px;top:557.01px;font-size:14.6px;line-height:16.79px;color:#8b008b;font-weight:bold;;transform:scaleX(1.0014);transform-origin:0 0">Current pending sectors</div>
<div class="t" style="left:612.59px;top:557.01px;font-size:14.6px;line-height:16.79px;color:#108a8a;font-weight:bold;;transform:scaleX(1.0900);transform-origin:0 0">100</div>
<div class="t" style="left:695.89px;top:557.01px;font-size:14.6px;line-height:16.79px;color:#108a8a;font-weight:bold;;transform:scaleX(1.0900);transform-origin:0 0">100</div>
<div class="t" style="left:793.08px;top:557.01px;font-size:14.6px;line-height:16.79px;color:#8a8a10;font-weight:bold;;transform:scaleX(1.0900);transform-origin:0 0">0</div>
<div class="t" style="left:925.59px;top:557.01px;font-size:14.6px;line-height:16.79px;color:#ff0000;font-weight:bold;;transform:scaleX(1.0900);transform-origin:0 0">408</div>
<div class="b" style="left:974.80px;top:562.48px;width:6.4px;height:6.4px;border-radius:50%;background:#006f00"></div>
<div class="b" style="left:983.65px;top:562.48px;width:6.4px;height:6.4px;border-radius:50%;background:#006f00"></div>
<div class="b" style="left:992.50px;top:562.48px;width:6.4px;height:6.4px;border-radius:50%;background:#006f00"></div>
<div class="b" style="left:1001.35px;top:562.48px;width:6.4px;height:6.4px;border-radius:50%;background:#006f00"></div>
<div class="b" style="left:1010.20px;top:562.48px;width:6.4px;height:6.4px;border-radius:50%;background:#006f00"></div>
<div class="t" style="left:24.39px;top:578.24px;font-size:14.6px;line-height:16.79px;color:#14148a;font-weight:bold;;transform:scaleX(1.0900);transform-origin:0 0">198</div>
<div class="t" style="left:69.00px;top:578.24px;font-size:14.6px;line-height:16.79px;color:#8b008b;font-weight:bold;;transform:scaleX(1.0026);transform-origin:0 0">Offline uncorrectable sectors count</div>
<div class="t" style="left:612.59px;top:578.24px;font-size:14.6px;line-height:16.79px;color:#108a8a;font-weight:bold;;transform:scaleX(1.0900);transform-origin:0 0">100</div>
<div class="t" style="left:695.89px;top:578.24px;font-size:14.6px;line-height:16.79px;color:#108a8a;font-weight:bold;;transform:scaleX(1.0900);transform-origin:0 0">100</div>
<div class="t" style="left:793.08px;top:578.24px;font-size:14.6px;line-height:16.79px;color:#8a8a10;font-weight:bold;;transform:scaleX(1.0900);transform-origin:0 0">0</div>
<div class="t" style="left:943.28px;top:578.24px;font-size:14.6px;line-height:16.79px;color:#1a8a1a;font-weight:bold;;transform:scaleX(1.0900);transform-origin:0 0">0</div>
<div class="b" style="left:974.80px;top:583.70px;width:6.4px;height:6.4px;border-radius:50%;background:#006f00"></div>
<div class="b" style="left:983.65px;top:583.70px;width:6.4px;height:6.4px;border-radius:50%;background:#006f00"></div>
<div class="b" style="left:992.50px;top:583.70px;width:6.4px;height:6.4px;border-radius:50%;background:#006f00"></div>
<div class="b" style="left:1001.35px;top:583.70px;width:6.4px;height:6.4px;border-radius:50%;background:#006f00"></div>
<div class="b" style="left:1010.20px;top:583.70px;width:6.4px;height:6.4px;border-radius:50%;background:#006f00"></div>
<div class="t" style="left:24.39px;top:599.46px;font-size:14.6px;line-height:16.79px;color:#14148a;font-weight:bold;;transform:scaleX(1.0900);transform-origin:0 0">199</div>
<div class="t" style="left:69.00px;top:599.46px;font-size:14.6px;line-height:16.79px;color:#000;font-weight:bold;;transform:scaleX(0.9814);transform-origin:0 0">Ultra DMA CRC errors</div>
<div class="t" style="left:612.59px;top:599.46px;font-size:14.6px;line-height:16.79px;color:#108a8a;font-weight:bold;;transform:scaleX(1.0900);transform-origin:0 0">200</div>
<div class="t" style="left:695.89px;top:599.46px;font-size:14.6px;line-height:16.79px;color:#108a8a;font-weight:bold;;transform:scaleX(1.0900);transform-origin:0 0">200</div>
<div class="t" style="left:793.08px;top:599.46px;font-size:14.6px;line-height:16.79px;color:#8a8a10;font-weight:bold;;transform:scaleX(1.0900);transform-origin:0 0">0</div>
<div class="t" style="left:943.28px;top:599.46px;font-size:14.6px;line-height:16.79px;color:#1a8a1a;font-weight:bold;;transform:scaleX(1.0900);transform-origin:0 0">0</div>
<div class="b" style="left:974.80px;top:604.93px;width:6.4px;height:6.4px;border-radius:50%;background:#006f00"></div>
<div class="b" style="left:983.65px;top:604.93px;width:6.4px;height:6.4px;border-radius:50%;background:#006f00"></div>
<div class="b" style="left:992.50px;top:604.93px;width:6.4px;height:6.4px;border-radius:50%;background:#006f00"></div>
<div class="b" style="left:1001.35px;top:604.93px;width:6.4px;height:6.4px;border-radius:50%;background:#006f00"></div>
<div class="b" style="left:1010.20px;top:604.93px;width:6.4px;height:6.4px;border-radius:50%;background:#006f00"></div>
<div class="t" style="left:25.26px;top:620.69px;font-size:14.6px;line-height:16.79px;color:#14148a;font-weight:bold;;transform:scaleX(1.0900);transform-origin:0 0">211</div>
<div class="t" style="left:69.00px;top:620.69px;font-size:14.6px;line-height:16.79px;color:#000;font-weight:bold;;transform:scaleX(1.0110);transform-origin:0 0">Vibration during read</div>
<div class="t" style="left:612.59px;top:620.69px;font-size:14.6px;line-height:16.79px;color:#108a8a;font-weight:bold;;transform:scaleX(1.0900);transform-origin:0 0">100</div>
<div class="t" style="left:695.89px;top:620.69px;font-size:14.6px;line-height:16.79px;color:#108a8a;font-weight:bold;;transform:scaleX(1.0900);transform-origin:0 0">100</div>
<div class="t" style="left:793.08px;top:620.69px;font-size:14.6px;line-height:16.79px;color:#8a8a10;font-weight:bold;;transform:scaleX(1.0900);transform-origin:0 0">0</div>
<div class="t" style="left:853.00px;top:620.69px;font-size:14.6px;line-height:16.79px;color:#7f0000;font-weight:bold;;transform:scaleX(1.1106);transform-origin:0 0">124 / 29 / 343</div>
<div class="b" style="left:974.80px;top:626.15px;width:6.4px;height:6.4px;border-radius:50%;background:#006f00"></div>
<div class="b" style="left:983.65px;top:626.15px;width:6.4px;height:6.4px;border-radius:50%;background:#006f00"></div>
<div class="b" style="left:992.50px;top:626.15px;width:6.4px;height:6.4px;border-radius:50%;background:#006f00"></div>
<div class="b" style="left:1001.35px;top:626.15px;width:6.4px;height:6.4px;border-radius:50%;background:#006f00"></div>
<div class="b" style="left:1010.20px;top:626.15px;width:6.4px;height:6.4px;border-radius:50%;background:#006f00"></div>
<div class="t" style="left:24.39px;top:641.91px;font-size:14.6px;line-height:16.79px;color:#14148a;font-weight:bold;;transform:scaleX(1.0900);transform-origin:0 0">222</div>
<div class="t" style="left:69.00px;top:641.91px;font-size:14.6px;line-height:16.79px;color:#000;font-weight:bold;;transform:scaleX(0.9817);transform-origin:0 0">Loaded hours</div>
<div class="t" style="left:612.59px;top:641.91px;font-size:14.6px;line-height:16.79px;color:#108a8a;font-weight:bold;;transform:scaleX(1.0900);transform-origin:0 0">100</div>
<div class="t" style="left:695.89px;top:641.91px;font-size:14.6px;line-height:16.79px;color:#108a8a;font-weight:bold;;transform:scaleX(1.0900);transform-origin:0 0">100</div>
<div class="t" style="left:793.08px;top:641.91px;font-size:14.6px;line-height:16.79px;color:#8a8a10;font-weight:bold;;transform:scaleX(1.0900);transform-origin:0 0">0</div>
<div class="t" style="left:943.28px;top:641.91px;font-size:14.6px;line-height:16.79px;color:#7f0000;font-weight:bold;;transform:scaleX(1.0900);transform-origin:0 0">0</div>
<div class="b" style="left:974.80px;top:647.38px;width:6.4px;height:6.4px;border-radius:50%;background:#006f00"></div>
<div class="b" style="left:983.65px;top:647.38px;width:6.4px;height:6.4px;border-radius:50%;background:#006f00"></div>
<div class="b" style="left:992.50px;top:647.38px;width:6.4px;height:6.4px;border-radius:50%;background:#006f00"></div>
<div class="b" style="left:1001.35px;top:647.38px;width:6.4px;height:6.4px;border-radius:50%;background:#006f00"></div>
<div class="b" style="left:1010.20px;top:647.38px;width:6.4px;height:6.4px;border-radius:50%;background:#006f00"></div>
<div class="t" style="left:24.39px;top:663.14px;font-size:14.6px;line-height:16.79px;color:#14148a;font-weight:bold;;transform:scaleX(1.0900);transform-origin:0 0">223</div>
<div class="t" style="left:69.00px;top:663.14px;font-size:14.6px;line-height:16.79px;color:#1a8a1a;font-weight:bold;;transform:scaleX(1.0158);transform-origin:0 0">Load retry count</div>
<div class="t" style="left:612.59px;top:663.14px;font-size:14.6px;line-height:16.79px;color:#108a8a;font-weight:bold;;transform:scaleX(1.0900);transform-origin:0 0">100</div>
<div class="t" style="left:695.89px;top:663.14px;font-size:14.6px;line-height:16.79px;color:#108a8a;font-weight:bold;;transform:scaleX(1.0900);transform-origin:0 0">100</div>
<div class="t" style="left:784.23px;top:663.14px;font-size:14.6px;line-height:16.79px;color:#8a8a10;font-weight:bold;;transform:scaleX(1.0900);transform-origin:0 0">50</div>
<div class="t" style="left:943.28px;top:663.14px;font-size:14.6px;line-height:16.79px;color:#1a8a1a;font-weight:bold;;transform:scaleX(1.0900);transform-origin:0 0">0</div>
<div class="b" style="left:974.80px;top:668.60px;width:6.4px;height:6.4px;border-radius:50%;background:#006f00"></div>
<div class="b" style="left:983.65px;top:668.60px;width:6.4px;height:6.4px;border-radius:50%;background:#006f00"></div>
<div class="b" style="left:992.50px;top:668.60px;width:6.4px;height:6.4px;border-radius:50%;background:#006f00"></div>
<div class="b" style="left:1001.35px;top:668.60px;width:6.4px;height:6.4px;border-radius:50%;background:#006f00"></div>
<div class="b" style="left:1010.20px;top:668.60px;width:6.4px;height:6.4px;border-radius:50%;background:#006f00"></div>
<div class="t" style="left:24.39px;top:684.36px;font-size:14.6px;line-height:16.79px;color:#14148a;font-weight:bold;;transform:scaleX(1.0900);transform-origin:0 0">226</div>
<div class="t" style="left:69.00px;top:684.36px;font-size:14.6px;line-height:16.79px;color:#1a8a1a;font-weight:bold;;transform:scaleX(1.0204);transform-origin:0 0">Load-in time</div>
<div class="t" style="left:612.59px;top:684.36px;font-size:14.6px;line-height:16.79px;color:#108a8a;font-weight:bold;;transform:scaleX(1.0900);transform-origin:0 0">173</div>
<div class="t" style="left:695.89px;top:684.36px;font-size:14.6px;line-height:16.79px;color:#108a8a;font-weight:bold;;transform:scaleX(1.0900);transform-origin:0 0">173</div>
<div class="t" style="left:784.23px;top:684.36px;font-size:14.6px;line-height:16.79px;color:#8a8a10;font-weight:bold;;transform:scaleX(1.0900);transform-origin:0 0">40</div>
<div class="t" style="left:903.00px;top:684.36px;font-size:14.6px;line-height:16.79px;color:#7f0000;font-weight:bold;;transform:scaleX(1.1008);transform-origin:0 0">136 / 2</div>
<div class="b" style="left:974.80px;top:689.83px;width:6.4px;height:6.4px;border-radius:50%;background:#006f00"></div>
<div class="b" style="left:983.65px;top:689.83px;width:6.4px;height:6.4px;border-radius:50%;background:#006f00"></div>
<div class="b" style="left:992.50px;top:689.83px;width:6.4px;height:6.4px;border-radius:50%;background:#006f00"></div>
<div class="b" style="left:1001.35px;top:689.83px;width:6.4px;height:6.4px;border-radius:50%;background:#006f00"></div>
<div class="b" style="left:1010.20px;top:689.83px;width:6.4px;height:6.4px;border-radius:50%;background:#006f00"></div>
<div class="t" style="left:24.39px;top:705.59px;font-size:14.6px;line-height:16.79px;color:#14148a;font-weight:bold;;transform:scaleX(1.0900);transform-origin:0 0">230</div>
<div class="t" style="left:69.00px;top:705.59px;font-size:14.6px;line-height:16.79px;color:#000;font-weight:bold;;transform:scaleX(1.0047);transform-origin:0 0">GMR head amplitude</div>
<div class="t" style="left:621.43px;top:705.59px;font-size:14.6px;line-height:16.79px;color:#108a8a;font-weight:bold;;transform:scaleX(1.0900);transform-origin:0 0">92</div>
<div class="t" style="left:704.73px;top:705.59px;font-size:14.6px;line-height:16.79px;color:#108a8a;font-weight:bold;;transform:scaleX(1.0900);transform-origin:0 0">91</div>
<div class="t" style="left:793.08px;top:705.59px;font-size:14.6px;line-height:16.79px;color:#8a8a10;font-weight:bold;;transform:scaleX(1.0900);transform-origin:0 0">0</div>
<div class="t" style="left:903.00px;top:705.59px;font-size:14.6px;line-height:16.79px;color:#7f0000;font-weight:bold;;transform:scaleX(1.1008);transform-origin:0 0">23 / 13</div>
<div class="b" style="left:974.80px;top:711.05px;width:6.4px;height:6.4px;border-radius:50%;background:#ffc02e"></div>
<div class="b" style="left:983.65px;top:711.05px;width:6.4px;height:6.4px;border-radius:50%;background:#ffc02e"></div>
<div class="b" style="left:992.50px;top:711.05px;width:6.4px;height:6.4px;border-radius:50%;background:#ffc02e"></div>
<div class="b" style="left:1001.35px;top:711.05px;width:6.4px;height:6.4px;border-radius:50%;background:#ffc02e"></div>
<div class="b" style="left:1829px;top:153px;width:89px;height:767px;background:#ababab;border-left:2px solid #8a8a8a;border-top:2px solid #8a8a8a;box-sizing:border-box"></div>
<div class="b" style="left:1843.6px;top:165.4px;width:14px;height:14px;border-radius:50%;background:#fff;box-shadow:0 0 0 0.7px #8c8c8c"></div>
<div class="b" style="left:1846.8px;top:168.6px;width:7.6px;height:7.6px;border-radius:50%;background:#cdcdcd"></div>
<div class="b" style="left:1843.6px;top:193.4px;width:14px;height:14px;border-radius:50%;background:#fff;box-shadow:0 0 0 0.7px #8c8c8c"></div>
<div class="t" style="left:1865.50px;top:165.93px;font-size:15px;line-height:17.25px;color:#7e7e7e;font-weight:normal;;transform:scaleX(1.0126);transform-origin:0 0">API</div>
<div class="t" style="left:1864.51px;top:193.43px;font-size:15px;line-height:17.25px;color:#7e7e7e;font-weight:normal;;transform:scaleX(0.9887);transform-origin:0 0">PIO</div>
<div class="b" style="left:1840px;top:229px;width:24px;height:12.5px;background:#828282;border:1.6px solid #1a1a1a;box-sizing:border-box;border-radius:1px"></div>
<div class="b" style="left:1840px;top:268px;width:69px;height:26px;background:#e1e1e1"></div>
<div class="t" style="left:1854.00px;top:272.43px;font-size:15px;line-height:17.25px;color:#000;font-weight:normal;;transform:scaleX(1.0468);transform-origin:0 0">Sleep</div>
<div class="b" style="left:1840px;top:345px;width:69px;height:26px;background:#e1e1e1"></div>
<div class="t" style="left:1852.38px;top:349.43px;font-size:15px;line-height:17.25px;color:#000;font-weight:normal;;transform:scaleX(1.0211);transform-origin:0 0">Recall</div>
<div class="b" style="left:1840px;top:862.5px;width:69px;height:26px;background:#e1e1e1"></div>
<div class="t" style="left:1852.99px;top:866.92px;font-size:15px;line-height:17.25px;color:#000;font-weight:normal;;transform:scaleX(1.0063);transform-origin:0 0">Passp</div>
<div class="b" style="left:1838px;top:775px;width:34px;height:17px;background:#a4a4a4;border:2px solid #3a3a3a;border-radius:3px;box-sizing:border-box"></div>
<div class="b" style="left:1877px;top:775px;width:34px;height:17px;background:#a4a4a4;border:2px solid #3a3a3a;border-radius:3px;box-sizing:border-box"></div>
<div class="t" style="left:1555px;width:600px;text-align:center;top:778.04px;font-size:11px;line-height:12.65px;color:#c4c4c4;font-weight:bold;">WR</div>
<div class="t" style="left:1594px;width:600px;text-align:center;top:778.04px;font-size:11px;line-height:12.65px;color:#c4c4c4;font-weight:bold;">RD</div>
<div class="b" style="left:5px;top:885px;width:1821px;height:4px;background:#d8d8d8"></div>
<div class="b" style="left:5px;top:889px;width:1821px;height:1px;background:#a8a8a8"></div>
<div class="b" style="left:5px;top:890px;width:1821px;height:28px;background:#d9d9d9"></div>
<div class="b" style="left:7.5px;top:892.4px;width:212px;height:23.8px;background:#e1e1e1;border:2.3px solid #0078d7;box-sizing:border-box"></div>
<div class="t" style="left:60.00px;top:896.18px;font-size:15.6px;line-height:17.94px;color:#000;font-weight:normal;;transform:scaleX(1.0229);transform-origin:0 0">Get S.M.A.R.T.</div>
<div class="t" style="left:245.70px;top:896.18px;font-size:15.6px;line-height:17.94px;color:#000;font-weight:normal;;transform:scaleX(0.9935);transform-origin:0 0">Status:</div>
<div class="b" style="left:302px;top:894px;width:73px;height:21px;background:#000"></div>
<div class="t" style="left:312.00px;top:896.18px;font-size:15.6px;line-height:17.94px;color:#ff1010;font-weight:normal;;transform:scaleX(0.9986);transform-origin:0 0">Caution</div>
<div class="b" style="left:411px;top:896px;width:16px;height:16px;background:#fff;border:1px solid #333;box-sizing:border-box"></div>
<div class="t" style="left:433.47px;top:896.18px;font-size:15.6px;line-height:17.94px;color:#000;font-weight:normal;;transform:scaleX(0.9316);transform-origin:0 0">HEX raw values</div>
<div class="t" style="left:1613.02px;top:896.18px;font-size:15.6px;line-height:17.94px;color:#000;font-weight:normal;;transform:scaleX(0.9796);transform-origin:0 0">IBM super smart:</div>
<svg class="b" style="left:1735px;top:896px" width="17" height="17"><rect x="0.5" y="0.5" width="16" height="16" fill="#fff" stroke="#444" stroke-width="1.2"/><path d="M3 8.5 L6.5 12 L13.5 4" fill="none" stroke="#505050" stroke-width="1.5"/></svg>
<div class="b" style="left:1774px;top:896px;width:16px;height:17px;background:#80bfff;border:1.5px solid #222;border-radius:3px;box-sizing:border-box"></div>
<div class="b" style="left:0px;top:920px;width:1919px;height:6px;background:#f0f0f0"></div>
<div class="b" style="left:0px;top:926px;width:1829px;height:1px;background:#8e949c"></div>
<div class="b" style="left:0px;top:927px;width:1806px;height:102px;background:#f2fff2"></div>
<div class="b" style="left:0px;top:927px;width:1px;height:102px;background:#8a8a8a"></div>
<div class="b" style="left:90px;top:929px;width:1px;height:100px;background:#e6eee6"></div>
<div class="b" style="left:1px;top:952px;width:1805px;height:1px;background:#e6eee6"></div>
<div class="b" style="left:1px;top:978px;width:1805px;height:1px;background:#e6eee6"></div>
<div class="b" style="left:1px;top:1003px;width:1805px;height:1px;background:#e6eee6"></div>
<div class="t" style="left:11.91px;top:933.25px;font-size:15.3px;line-height:17.59px;color:#000;font-weight:normal;;transform:scaleX(1.0855);transform-origin:0 0">14:58:00</div>
<div class="t" style="left:97.50px;top:933.25px;font-size:15.3px;line-height:17.59px;color:#000;font-weight:normal;;transform:scaleX(1.0372);transform-origin:0 0">Get S.M.A.R.T. command... OK</div>
<div class="t" style="left:11.91px;top:958.25px;font-size:15.3px;line-height:17.59px;color:#000;font-weight:normal;;transform:scaleX(1.0855);transform-origin:0 0">14:58:01</div>
<div class="t" style="left:96.44px;top:958.25px;font-size:15.3px;line-height:17.59px;color:#000;font-weight:normal;;transform:scaleX(1.0563);transform-origin:0 0">Drive reported: SMART status = Unknown</div>
<div class="t" style="left:11.91px;top:983.15px;font-size:15.3px;line-height:17.59px;color:#000;font-weight:normal;;transform:scaleX(1.0855);transform-origin:0 0">14:58:01</div>
<div class="t" style="left:97.50px;top:983.15px;font-size:15.3px;line-height:17.59px;color:#ff2020;font-weight:normal;;transform:scaleX(1.0426);transform-origin:0 0">Victoria reported: SMART status = WARNING!</div>
<div class="b" style="left:1806px;top:927px;width:22px;height:102px;background:#f0f0f0"></div>
<div class="b" style="left:1806px;top:985px;width:19px;height:21px;background:#cdcdcd"></div>
<div class="b" style="left:1827px;top:926px;width:1px;height:103px;background:#8e949c"></div>
<div class="b" style="left:0px;top:1028px;width:1828px;height:1px;background:#8e949c"></div>
<svg class="b" style="left:1808px;top:934px" width="16" height="12"><path d="M3.6 8.6 L7.7 4.2 L11.8 8.6" fill="none" stroke="#5a5a5a" stroke-width="2.3"/></svg>
<svg class="b" style="left:1808px;top:1011px" width="16" height="12"><path d="M3.6 3.4 L7.7 7.8 L11.8 3.4" fill="none" stroke="#5a5a5a" stroke-width="2.3"/></svg>
<div class="b" style="left:1828px;top:927px;width:91px;height:101px;background:#ababab"></div>
<svg class="b" style="left:1840px;top:937px" width="17" height="17"><rect x="0.5" y="0.5" width="16" height="16" fill="#fff" stroke="#444" stroke-width="1.2"/><path d="M3 8.5 L6.5 12 L13.5 4" fill="none" stroke="#505050" stroke-width="1.5"/></svg>
<div class="b" style="left:1840px;top:966px;width:17px;height:17px;background:#fff;border:1px solid #333;box-sizing:border-box"></div>
<div class="t" style="left:1862.60px;top:937.42px;font-size:15px;line-height:17.25px;color:#000;font-weight:normal;;transform:scaleX(0.9969);transform-origin:0 0">Sound</div>
<div class="t" style="left:1861.57px;top:966.42px;font-size:15px;line-height:17.25px;color:#000;font-weight:normal;;transform:scaleX(1.0283);transform-origin:0 0">Hints</div>
<div class="b" style="left:0px;top:1029px;width:1919px;height:8px;background:linear-gradient(to right,#233b45 0%,#22374a 50%,#1a2744 100%)"></div>
<div class="b" style="left:1828px;top:1028px;width:91px;height:1px;background:#f4f4f4"></div>
<div class="b" style="left:1914px;top:1029px;width:1px;height:8px;background:#6a7890"></div>
<div class="b" style="left:434px;top:1029px;width:61px;height:8px;background:#4d5f69"></div></body></html>
